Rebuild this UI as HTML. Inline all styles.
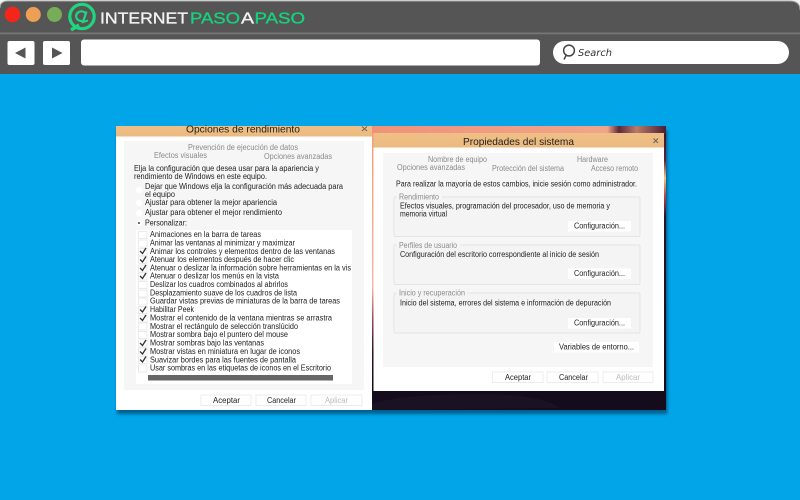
<!DOCTYPE html>
<html><head><meta charset="utf-8"><style>
html,body{margin:0;padding:0;background:#03a5e9;width:800px;height:500px;overflow:hidden}
svg{display:block;position:absolute;left:0;top:0}
text{font-family:"Liberation Sans",sans-serif;font-size:7.8px;fill:#222;white-space:pre}
.g{fill:#8a8a8a}
.t{font-size:10.5px;fill:#222}
.soft{filter:blur(.3px)}
.box{fill:#fff;stroke:#e4e4e4;stroke-width:.7}
.cb{fill:#fff;stroke:#e6e6e6;stroke-width:.8}
.ck{fill:none;stroke:#333;stroke-width:1.3}
.grp{fill:#f4f4f4;stroke:#dedede;stroke-width:.7}
.logo{font-size:16px;stroke-width:.35px}
</style></head><body>
<svg width="800" height="500" viewBox="0 0 800 500" xmlns="http://www.w3.org/2000/svg">
<defs>
<linearGradient id="tan" x1="0" y1="0" x2="0" y2="1"><stop offset="0" stop-color="#f0bf85"/><stop offset="1" stop-color="#ebba80"/></linearGradient>
<linearGradient id="topb" x1="0" y1="0" x2="1" y2="0"><stop offset="0" stop-color="#f0927a"/><stop offset=".8" stop-color="#f0a58a"/><stop offset=".84" stop-color="#5a2a3a"/><stop offset=".9" stop-color="#b87a68"/><stop offset="1" stop-color="#4a1f35"/></linearGradient>
<linearGradient id="strip" x1="0" y1="0" x2="0" y2="1"><stop offset="0" stop-color="#3a1830"/><stop offset=".1" stop-color="#5a2038"/><stop offset=".17" stop-color="#e8c880"/><stop offset=".24" stop-color="#c04050"/><stop offset=".32" stop-color="#2a1428"/><stop offset="1" stop-color="#140c1c"/></linearGradient>
<linearGradient id="lstrip" x1="0" y1="0" x2="0" y2="1"><stop offset="0" stop-color="#f0a080"/><stop offset=".6" stop-color="#f2b8a8"/><stop offset=".72" stop-color="#a04858"/><stop offset=".85" stop-color="#2a1428"/><stop offset="1" stop-color="#140c1c"/></linearGradient>
<filter id="sh" x="-10%" y="-10%" width="120%" height="120%"><feGaussianBlur stdDeviation="1.6"/></filter>
</defs>

<!-- browser chrome -->
<rect x="0" y="0" width="800" height="12" fill="#f2f2f2"/>
<path d="M0 74V8Q0 1 8 1H790Q800 1 800 10V74Z" fill="#555555"/>
<path d="M0 8Q0 1 8 1H790Q800 1 800 10" fill="none" stroke="#a8a8a8" stroke-width="1"/>
<rect x="0" y="32.5" width="800" height="1.8" fill="#757575"/>
<circle cx="12.5" cy="14.5" r="7.8" fill="#f4261a"/>
<circle cx="33.3" cy="14.5" r="7.5" fill="#eda055"/>
<circle cx="54.5" cy="14.5" r="7.5" fill="#78ad58"/>
<circle cx="82" cy="16.5" r="12.2" fill="none" stroke="#1fd67e" stroke-width="3.2"/>
<path d="M71 30L79 25" stroke="#1fd67e" stroke-width="3.4" fill="none"/>
<path d="M86.5 11.5L83 22L88 20.5M86 14A5.2 4.8 0 1 0 82.5 20.8" fill="none" stroke="#1fd67e" stroke-width="2.2"/>
<text class="logo" x="100" y="23.5" textLength="88" lengthAdjust="spacingAndGlyphs" style="fill:#f2f2f2;stroke:#f2f2f2">INTERNET</text>
<text class="logo" x="190" y="23.5" textLength="50" lengthAdjust="spacingAndGlyphs" style="fill:#16d27a;stroke:#16d27a">PASO</text>
<text class="logo" x="241" y="23.5" textLength="13" lengthAdjust="spacingAndGlyphs" style="fill:#f2f2f2;stroke:#f2f2f2">A</text>
<text class="logo" x="254.5" y="23.5" textLength="50.5" lengthAdjust="spacingAndGlyphs" style="fill:#16d27a;stroke:#16d27a">PASO</text>

<rect x="7.5" y="41" width="27" height="24" rx="2" fill="#fff"/>
<path d="M15 53L25.5 47.5V58.5Z" fill="#555"/>
<rect x="43" y="41" width="27" height="24" rx="2" fill="#fff"/>
<path d="M62.5 53L52 47.5V58.5Z" fill="#555"/>
<rect x="81" y="39.5" width="459" height="26" rx="3" fill="#fff"/>
<rect x="553" y="41" width="236" height="23" rx="11.5" fill="#fff"/>
<circle cx="569" cy="50.5" r="5.4" fill="none" stroke="#444" stroke-width="1.5"/>
<path d="M566 55.5L564 59.5" stroke="#444" stroke-width="1.5" fill="none"/>
<text x="578" y="56" textLength="34" lengthAdjust="spacingAndGlyphs" style="font-family:'DejaVu Sans',sans-serif;font-style:italic;font-size:9.5px;fill:#333">Search</text>

<!-- shadows -->
<rect x="117" y="130" width="550.5" height="284" fill="#02304f" opacity=".6" filter="url(#sh)"/>

<!-- backdrop right -->
<rect x="372" y="126" width="294" height="284" fill="#140c1c"/>
<rect x="372" y="126" width="294" height="8" fill="url(#topb)"/>
<rect x="664" y="134" width="2" height="258" fill="url(#strip)"/>
<rect x="372" y="134" width="1.5" height="257" fill="url(#lstrip)"/>
<path d="M372 404Q400 394 480 394Q540 394 560 408L372 410Z" fill="#1a1222"/>

<g class="soft">
<!-- left window -->
<rect x="116" y="126" width="256" height="284" fill="#fff"/>
<rect x="116" y="126" width="256" height="10.5" fill="url(#tan)"/>
<text class="t" x="186" y="132.5" textLength="114" lengthAdjust="spacingAndGlyphs">Opciones de rendimiento</text>
<path d="M362 126.5L367 131M367 126.5L362 131" stroke="#666" stroke-width="1" fill="none"/>
<rect x="124" y="141" width="240" height="249" fill="#f6f6f6"/>
<text class="g" x="188" y="150" textLength="110" lengthAdjust="spacingAndGlyphs">Prevención de ejecución de datos</text>
<text class="g" x="154" y="158" textLength="53" lengthAdjust="spacingAndGlyphs">Efectos visuales</text>
<text class="g" x="264" y="159" textLength="68" lengthAdjust="spacingAndGlyphs">Opciones avanzadas</text>
<text x="134" y="171" textLength="185" lengthAdjust="spacingAndGlyphs">Elja la configuración que desea usar para la apariencia y</text>
<text x="134" y="179" textLength="133" lengthAdjust="spacingAndGlyphs">rendimiento de Windows en este equipo.</text>
<circle cx="139" cy="190" r="3.2" fill="#fff"/><circle cx="139" cy="203" r="3.2" fill="#fff"/><circle cx="139" cy="213" r="3.2" fill="#fff"/><circle cx="139" cy="223" r="3.2" fill="#fff"/><circle cx="139" cy="223" r="1" fill="#444"/>
<text x="145" y="189" textLength="198" lengthAdjust="spacingAndGlyphs">Dejar que Windows elja la configuración más adecuada para</text>
<text x="145" y="197" textLength="30" lengthAdjust="spacingAndGlyphs">el equipo</text>
<text x="145" y="205" textLength="132" lengthAdjust="spacingAndGlyphs">Ajustar para obtener la mejor apariencia</text>
<text x="145" y="215" textLength="137" lengthAdjust="spacingAndGlyphs">Ajustar para obtener el mejor rendimiento</text>
<text x="145" y="225.5" textLength="42" lengthAdjust="spacingAndGlyphs">Personalizar:</text>
<rect x="136" y="230" width="216" height="154" fill="#fff"/>

<rect class="cb" x="138.5" y="231.5" width="8.5" height="7"/>
<rect class="cb" x="138.5" y="240" width="8.5" height="7"/>
<rect class="cb" x="138.5" y="248.5" width="8.5" height="7"/>
<rect class="cb" x="138.5" y="256.5" width="8.5" height="7"/>
<rect class="cb" x="138.5" y="265" width="8.5" height="7"/>
<rect class="cb" x="138.5" y="273" width="8.5" height="7"/>
<rect class="cb" x="138.5" y="281.5" width="8.5" height="7"/>
<rect class="cb" x="138.5" y="290" width="8.5" height="7"/>
<rect class="cb" x="138.5" y="298" width="8.5" height="7"/>
<rect class="cb" x="138.5" y="306.5" width="8.5" height="7"/>
<rect class="cb" x="138.5" y="315" width="8.5" height="7"/>
<rect class="cb" x="138.5" y="323" width="8.5" height="7"/>
<rect class="cb" x="138.5" y="331.5" width="8.5" height="7"/>
<rect class="cb" x="138.5" y="340" width="8.5" height="7"/>
<rect class="cb" x="138.5" y="348" width="8.5" height="7"/>
<rect class="cb" x="138.5" y="356.5" width="8.5" height="7"/>
<rect class="cb" x="138.5" y="365" width="8.5" height="7"/>
<path class="ck" d="M140 251L142.5 253.5L146 248M140 259.5L142.5 262L146 256.5M140 268L142.5 270.5L146 265M140 276L142.5 278.5L146 273M140 309.5L142.5 312L146 306.5M140 318L142.5 320.5L146 315M140 343L142.5 345.5L146 340M140 351.5L142.5 354L146 348.5M140 359.5L142.5 362L146 356.5"/>

<text x="150" y="237" textLength="111" lengthAdjust="spacingAndGlyphs">Animaciones en la barra de tareas</text>
<text x="150" y="245.5" textLength="145" lengthAdjust="spacingAndGlyphs">Animar las ventanas al minimizar y maximizar</text>
<text x="150" y="254" textLength="185" lengthAdjust="spacingAndGlyphs">Animar los controles y elementos dentro de las ventanas</text>
<text x="150" y="262" textLength="144" lengthAdjust="spacingAndGlyphs">Atenuar los elementos después de hacer clic</text>
<text x="150" y="270.3" textLength="201" lengthAdjust="spacingAndGlyphs">Atenuar o deslizar la información sobre herramientas en la vis</text>
<text x="150" y="278.6" textLength="129" lengthAdjust="spacingAndGlyphs">Atenuar o deslizar los menús en la vista</text>
<text x="150" y="287" textLength="138" lengthAdjust="spacingAndGlyphs">Deslizar los cuadros combinados al abrirlos</text>
<text x="150" y="295.3" textLength="147" lengthAdjust="spacingAndGlyphs">Desplazamiento suave de los cuadros de lista</text>
<text x="150" y="303.7" textLength="190" lengthAdjust="spacingAndGlyphs">Guardar vistas previas de miniaturas de la barra de tareas</text>
<text x="150" y="312" textLength="44" lengthAdjust="spacingAndGlyphs">Habilitar Peek</text>
<text x="150" y="320.5" textLength="182" lengthAdjust="spacingAndGlyphs">Mostrar el contenido de la ventana mientras se arrastra</text>
<text x="150" y="329" textLength="148" lengthAdjust="spacingAndGlyphs">Mostrar el rectángulo de selección translúcido</text>
<text x="150" y="337" textLength="138" lengthAdjust="spacingAndGlyphs">Mostrar sombra bajo el puntero del mouse</text>
<text x="150" y="345.5" textLength="114" lengthAdjust="spacingAndGlyphs">Mostrar sombras bajo las ventanas</text>
<text x="150" y="354" textLength="150" lengthAdjust="spacingAndGlyphs">Mostrar vistas en miniatura en lugar de iconos</text>
<text x="150" y="362.3" textLength="146" lengthAdjust="spacingAndGlyphs">Suavizar bordes para las fuentes de pantalla</text>
<text x="150" y="370.6" textLength="181" lengthAdjust="spacingAndGlyphs">Usar sombras en las etiquetas de iconos en el Escritorio</text>
<rect x="148" y="375" width="185" height="5.5" fill="#666"/>

<rect class="box" x="201" y="395" width="50" height="10.5"/>
<rect class="box" x="256" y="395" width="50" height="10.5"/>
<rect class="box" x="311" y="395" width="51" height="10.5"/>
<text x="213" y="403" textLength="27" lengthAdjust="spacingAndGlyphs">Aceptar</text>
<text x="267" y="403" textLength="29" lengthAdjust="spacingAndGlyphs">Cancelar</text>
<text x="325" y="403" textLength="23" lengthAdjust="spacingAndGlyphs" style="fill:#bbb">Aplicar</text>

<!-- right window -->
<rect x="373.5" y="133" width="290.5" height="258" fill="#fff"/>
<rect x="373.5" y="133" width="290.5" height="14.5" fill="url(#tan)"/>
<text class="t" x="463" y="145" textLength="111" lengthAdjust="spacingAndGlyphs">Propiedades del sistema</text>
<path d="M653.5 138.5L658 143M658 138.5L653.5 143" stroke="#666" stroke-width="1" fill="none"/>
<rect x="383" y="153" width="270" height="214" fill="#f6f6f6"/>
<text class="g" x="428" y="162" textLength="59" lengthAdjust="spacingAndGlyphs">Nombre de equipo</text>
<text class="g" x="577" y="162" textLength="31" lengthAdjust="spacingAndGlyphs">Hardware</text>
<text class="g" x="397" y="170" textLength="68" lengthAdjust="spacingAndGlyphs">Opciones avanzadas</text>
<text class="g" x="492" y="171" textLength="72" lengthAdjust="spacingAndGlyphs">Protección del sistema</text>
<text class="g" x="591" y="171" textLength="47" lengthAdjust="spacingAndGlyphs">Acceso remoto</text>
<text x="396" y="186.5" textLength="241" lengthAdjust="spacingAndGlyphs">Para realizar la mayoría de estos cambios, inicie sesión como administrador.</text>

<rect class="grp" x="394" y="197" width="246" height="39.5" rx="1"/>
<rect x="397" y="194" width="45" height="6" fill="#f6f6f6"/>
<text class="g" x="399" y="199.5" textLength="40" lengthAdjust="spacingAndGlyphs">Rendimiento</text>
<text x="400" y="208.5" textLength="210" lengthAdjust="spacingAndGlyphs">Efectos visuales, programación del procesador, uso de memoria y</text>
<text x="400" y="216.5" textLength="47" lengthAdjust="spacingAndGlyphs">memoria virtual</text>
<rect class="box" x="568" y="221" width="63" height="10.5" style="stroke:none"/>
<text x="574" y="228.5" textLength="51" lengthAdjust="spacingAndGlyphs">Configuración...</text>

<rect class="grp" x="394" y="245" width="246" height="39.5" rx="1"/>
<rect x="397" y="242" width="63" height="6" fill="#f6f6f6"/>
<text class="g" x="399" y="248" textLength="58" lengthAdjust="spacingAndGlyphs">Perfiles de usuario</text>
<text x="400" y="257" textLength="199" lengthAdjust="spacingAndGlyphs">Configuración del escritorio correspondiente al inicio de sesión</text>
<rect class="box" x="568" y="268.5" width="63" height="10.5" style="stroke:none"/>
<text x="574" y="276" textLength="51" lengthAdjust="spacingAndGlyphs">Configuración...</text>

<rect class="grp" x="394" y="293" width="246" height="40" rx="1"/>
<rect x="397" y="290" width="70" height="6" fill="#f6f6f6"/>
<text class="g" x="399" y="295.5" textLength="66" lengthAdjust="spacingAndGlyphs">Inicio y recuperación</text>
<text x="400" y="305.5" textLength="211" lengthAdjust="spacingAndGlyphs">Inicio del sistema, errores del sistema e información de depuración</text>
<rect class="box" x="568" y="318" width="63" height="10.5" style="stroke:none"/>
<text x="574" y="325.5" textLength="51" lengthAdjust="spacingAndGlyphs">Configuración...</text>

<rect class="box" x="554" y="342" width="85" height="10.5" style="stroke:none"/>
<text x="559" y="349.5" textLength="75" lengthAdjust="spacingAndGlyphs">Variables de entorno...</text>

<rect class="box" x="492.5" y="372" width="50.5" height="10.5"/>
<rect class="box" x="547" y="372" width="51" height="10.5"/>
<rect class="box" x="603" y="372" width="50" height="10.5"/>
<text x="505" y="380" textLength="26" lengthAdjust="spacingAndGlyphs">Aceptar</text>
<text x="559" y="380" textLength="29" lengthAdjust="spacingAndGlyphs">Cancelar</text>
<text x="616" y="380" textLength="24" lengthAdjust="spacingAndGlyphs" style="fill:#bbb">Aplicar</text>
</g>
</svg>
</body></html>
